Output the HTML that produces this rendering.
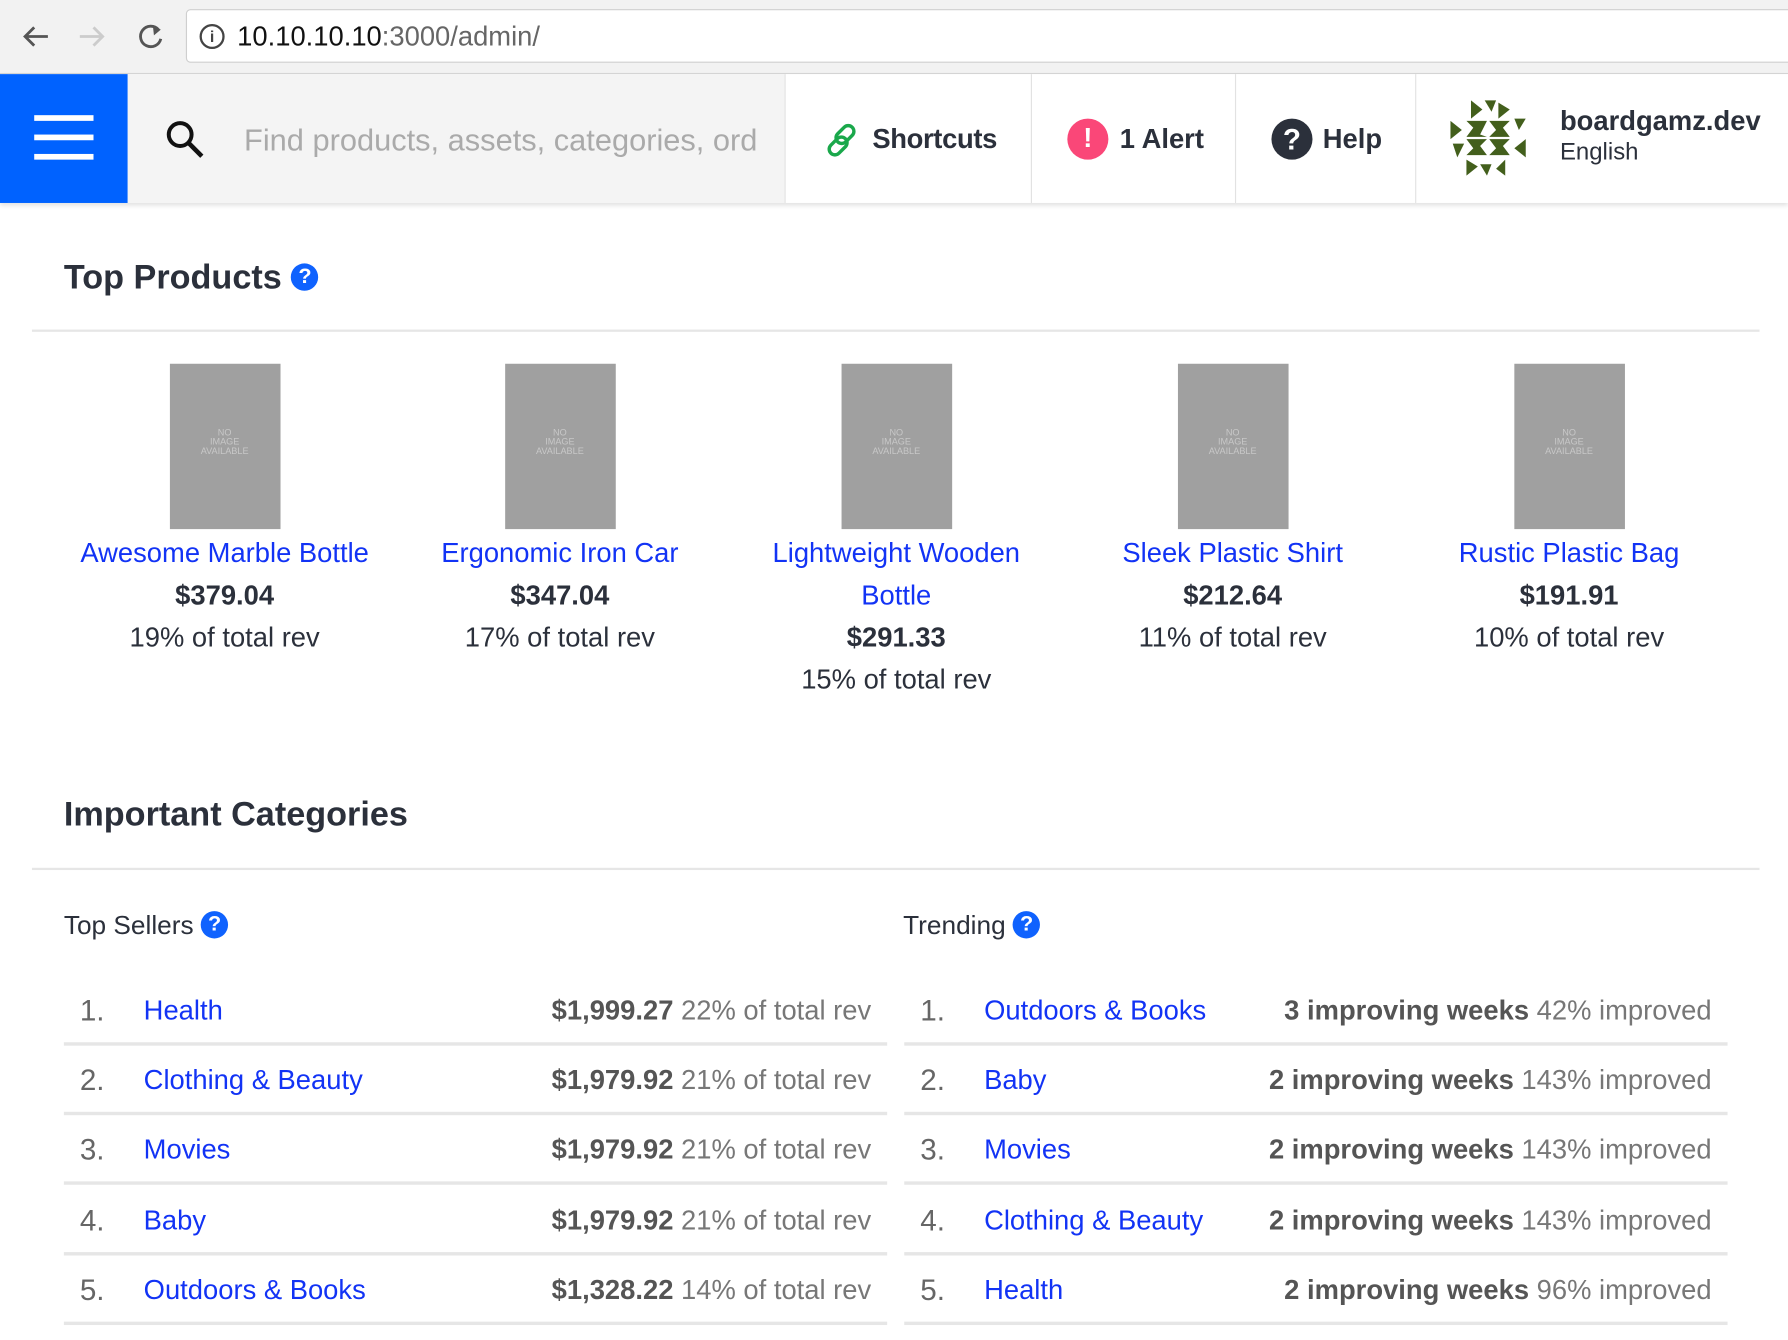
<!DOCTYPE html>
<html><head><meta charset="utf-8"><style>
*{margin:0;padding:0;box-sizing:border-box}
html,body{width:1788px;height:1340px;overflow:hidden;background:#fff;font-family:"Liberation Sans",Arial,sans-serif}
#w{position:absolute;left:0;top:0;width:1568px;height:1175px;transform:scale(1.14031);transform-origin:0 0}
.a{position:absolute;white-space:nowrap}
.lnk{color:#1233f5}
.dk{color:#2b303b}
.prod{position:absolute;top:319px;width:290px;text-align:center;font-size:24px;line-height:37px;color:#2b303b}
.prod .img{width:97px;height:145px;background:#a0a0a0;margin:0 auto;position:relative;color:#c8c8c8;font-size:8px;line-height:8px;padding-top:57px;margin-bottom:3px}
.help{display:inline-block;width:24px;height:24px;border-radius:50%;background:#0f62fe;color:#fff;font-size:19px;line-height:24px;text-align:center;font-weight:bold;vertical-align:middle}
.row{position:absolute;height:61.3px;border-bottom:3px solid #e6e6e6;font-size:24px;line-height:62px}
.row .n{position:absolute;left:14px;color:#666;font-size:26px;line-height:60px}
.row .nm{position:absolute;left:70px;color:#1233f5}
.row .r{position:absolute;right:14px;color:#777}
.row .r b{color:#555}
</style></head><body><div id="w">
<div class="a" style="left:0;top:0;width:1568px;height:65px;background:#f2f2f2;border-bottom:1px solid #d6d6d6"></div>
<svg class="a" style="left:18px;top:20px" width="130" height="26" viewBox="0 0 130 26"><path d="M24 12H4M12 4L4 12L12 20" stroke="#555" stroke-width="2.5" fill="none"/><path d="M52 12H72M64 4L72 12L64 20" stroke="#ccc" stroke-width="2.5" fill="none"/><path d="M121 6A9 9 0 1 0 123 14" stroke="#555" stroke-width="2.5" fill="none"/><path d="M116 2L123 6L117 11Z" fill="#555"/></svg>
<div class="a" style="left:163px;top:8px;width:1420px;height:47px;background:#fff;border:1px solid #cfcfcf;border-radius:4px"></div>
<div class="a" style="left:175px;top:21px;width:22px;height:22px;border:2px solid #444;border-radius:50%;font-size:14px;line-height:18px;text-align:center;color:#444;font-weight:bold">i</div>
<div class="a" style="left:208px;top:19px;font-size:24px;color:#111">10.10.10.10<span style="color:#666">:3000/admin/</span></div>

<div class="a" style="left:0;top:65px;width:1568px;height:113px;background:#fff;box-shadow:0 2px 4px rgba(0,0,0,.12)"></div>
<div class="a" style="left:0;top:65px;width:112px;height:113px;background:#0062ff"></div>
<div class="a" style="left:30px;top:101px;width:52px;height:5px;background:#fff;box-shadow:0 17px 0 #fff,0 34px 0 #fff"></div>
<div class="a" style="left:112px;top:65px;width:576px;height:113px;background:#f4f4f4"></div>
<svg class="a" style="left:144px;top:104px" width="38" height="38"><circle cx="14" cy="14" r="10" stroke="#111" stroke-width="3.5" fill="none"/><path d="M21 21L33 33" stroke="#111" stroke-width="4"/></svg>
<div class="a" style="left:214px;top:108px;font-size:27px;color:#aaa">Find products, assets, categories, ord</div>
<div class="a" style="left:688px;top:65px;width:1px;height:113px;background:#e2e2e2"></div>
<div class="a" style="left:904px;top:65px;width:1px;height:113px;background:#e2e2e2"></div>
<div class="a" style="left:1083px;top:65px;width:1px;height:113px;background:#e2e2e2"></div>
<div class="a" style="left:1241px;top:65px;width:1px;height:113px;background:#e2e2e2"></div>
<svg class="a" style="left:722px;top:107px" width="32" height="32" viewBox="0 0 32 32"><g stroke="#1aa84b" stroke-width="3" fill="none"><rect x="14" y="2" width="10" height="18" rx="5" transform="rotate(45 19 11)"/><rect x="8" y="12" width="10" height="18" rx="5" transform="rotate(45 13 21)"/></g></svg>
<div class="a dk" style="left:765px;top:109px;font-size:24px;font-weight:bold;letter-spacing:-0.3px">Shortcuts</div>
<div class="a" style="left:936px;top:104px;width:36px;height:36px;border-radius:50%;background:#fa4778;color:#fff;font-size:24px;font-weight:bold;text-align:center;line-height:36px">!</div>
<div class="a dk" style="left:982px;top:109px;font-size:24px;font-weight:bold">1 Alert</div>
<div class="a" style="left:1115px;top:104px;width:36px;height:36px;border-radius:50%;background:#2b303b;color:#fff;font-size:26px;font-weight:bold;text-align:center;line-height:36px">?</div>
<div class="a dk" style="left:1160px;top:109px;font-size:24px;font-weight:bold">Help</div>
<svg class="a" style="left:1268px;top:84px" width="74" height="74" viewBox="0 0 74 74"><g fill="#435f1c"><path d="M22 4L32 12L22 20Z"/><path d="M34 4L44 4L40 14Z"/><path d="M46 6L56 12L46 20Z"/><path d="M4 22L14 30L4 38Z"/><path d="M60 20L70 20L64 30Z"/><path d="M6 42L16 42L10 54Z"/><path d="M70 38L60 46L70 54Z"/><path d="M18 56L28 62L18 70Z"/><path d="M30 60L40 60L36 70Z"/><path d="M52 56L44 64L52 70Z"/><path d="M18 22L36 22L30 34L36 36L18 36L24 28Z"/><path d="M38 22L56 22L50 28L56 36L38 36L44 30Z"/><path d="M18 38L36 38L30 44L36 52L18 52L24 46Z"/><path d="M38 38L56 38L50 44L56 52L38 52L44 46Z"/></g></svg>
<div class="a dk" style="left:1368px;top:93px;font-size:24px;font-weight:bold">boardgamz.dev</div>
<div class="a dk" style="left:1368px;top:122px;font-size:21px">English</div>

<div class="a dk" style="left:56px;top:227px;font-size:30px;font-weight:bold">Top Products <span class="help" style="margin-top:-4px">?</span></div>
<div class="a" style="left:28px;top:289px;width:1515px;height:2px;background:#e6e6e6"></div>

<div class="prod" style="left:52px"><div class="img">NO<br>IMAGE<br>AVAILABLE</div><span class="lnk">Awesome Marble Bottle</span><br><b>$379.04</b><br>19% of total rev</div>
<div class="prod" style="left:346px"><div class="img">NO<br>IMAGE<br>AVAILABLE</div><span class="lnk">Ergonomic Iron Car</span><br><b>$347.04</b><br>17% of total rev</div>
<div class="prod" style="left:641px"><div class="img">NO<br>IMAGE<br>AVAILABLE</div><span class="lnk">Lightweight Wooden<br>Bottle</span><br><b>$291.33</b><br>15% of total rev</div>
<div class="prod" style="left:936px"><div class="img">NO<br>IMAGE<br>AVAILABLE</div><span class="lnk">Sleek Plastic Shirt</span><br><b>$212.64</b><br>11% of total rev</div>
<div class="prod" style="left:1231px"><div class="img">NO<br>IMAGE<br>AVAILABLE</div><span class="lnk">Rustic Plastic Bag</span><br><b>$191.91</b><br>10% of total rev</div>

<div class="a dk" style="left:56px;top:698px;font-size:30px;font-weight:bold">Important Categories</div>
<div class="a" style="left:28px;top:761px;width:1515px;height:2px;background:#e6e6e6"></div>

<div class="a dk" style="left:56px;top:798px;font-size:23px">Top Sellers <span class="help" style="margin-top:-4px">?</span></div>
<div class="a dk" style="left:792px;top:798px;font-size:23px">Trending <span class="help" style="margin-top:-4px">?</span></div>

<div class="row" style="left:56px;top:856px;width:722px"><span class="n">1.</span><span class="nm">Health</span><span class="r"><b>$1,999.27</b> 22% of total rev</span></div>
<div class="row" style="left:56px;top:917px;width:722px"><span class="n">2.</span><span class="nm">Clothing &amp; Beauty</span><span class="r"><b>$1,979.92</b> 21% of total rev</span></div>
<div class="row" style="left:56px;top:978px;width:722px"><span class="n">3.</span><span class="nm">Movies</span><span class="r"><b>$1,979.92</b> 21% of total rev</span></div>
<div class="row" style="left:56px;top:1040px;width:722px"><span class="n">4.</span><span class="nm">Baby</span><span class="r"><b>$1,979.92</b> 21% of total rev</span></div>
<div class="row" style="left:56px;top:1101px;width:722px"><span class="n">5.</span><span class="nm">Outdoors &amp; Books</span><span class="r"><b>$1,328.22</b> 14% of total rev</span></div>

<div class="row" style="left:793px;top:856px;width:722px"><span class="n">1.</span><span class="nm">Outdoors &amp; Books</span><span class="r"><b>3 improving weeks</b> 42% improved</span></div>
<div class="row" style="left:793px;top:917px;width:722px"><span class="n">2.</span><span class="nm">Baby</span><span class="r"><b>2 improving weeks</b> 143% improved</span></div>
<div class="row" style="left:793px;top:978px;width:722px"><span class="n">3.</span><span class="nm">Movies</span><span class="r"><b>2 improving weeks</b> 143% improved</span></div>
<div class="row" style="left:793px;top:1040px;width:722px"><span class="n">4.</span><span class="nm">Clothing &amp; Beauty</span><span class="r"><b>2 improving weeks</b> 143% improved</span></div>
<div class="row" style="left:793px;top:1101px;width:722px"><span class="n">5.</span><span class="nm">Health</span><span class="r"><b>2 improving weeks</b> 96% improved</span></div>
</div></body></html>
